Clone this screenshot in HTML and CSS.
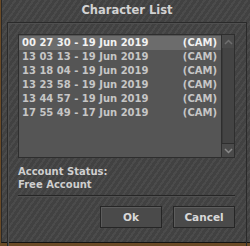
FILE: index.html
```html
<!DOCTYPE html>
<html lang="en">
<head>
    <meta charset="UTF-8">
    <title>Character List</title>
    <link rel="stylesheet" href="styles.css">
</head>
<body>
    <div class="window">
        <div class="title">Character List</div>
        <div class="panel">
            <div class="listbox">
                <div class="list" id="charList"></div>
                <div class="scrollbar">
                    <div class="arrow up">
                        <svg width="9" height="6" viewBox="0 0 9 6"><path d="M1 5 L4.5 1.5 L8 5" fill="none" stroke="#6e6e6e" stroke-width="1.5"/></svg>
                    </div>
                    <div class="track"></div>
                    <div class="arrow down">
                        <svg width="9" height="6" viewBox="0 0 9 6"><path d="M1 1 L4.5 4.5 L8 1" fill="none" stroke="#8a8a8a" stroke-width="1.5"/></svg>
                    </div>
                </div>
            </div>
            <div class="status">
                <div>Account Status:</div>
                <div>Free Account</div>
            </div>
            <div class="separator"></div>
            <div class="buttons">
                <div class="button">Ok</div>
                <div class="button">Cancel</div>
            </div>
        </div>
    </div>

    <script>
        const characters = [
            "00 27 30 - 19 Jun 2019",
            "13 03 13 - 19 Jun 2019",
            "13 18 04 - 19 Jun 2019",
            "13 23 58 - 19 Jun 2019",
            "13 44 57 - 19 Jun 2019",
            "17 55 49 - 17 Jun 2019"
        ];

        const charList = document.getElementById("charList");
        characters.forEach((name, i) => {
            const row = document.createElement("div");
            row.className = i === 0 ? "row selected" : "row";
            row.innerHTML = `<span>${name}</span><span>(CAM)</span>`;
            charList.appendChild(row);
        });
    </script>
</body>
</html>
```

FILE: styles.css
```css
/* General */
body {
    margin: 0;
    width: 250px;
    height: 246px;
    background: #6a4a26;
    font-family: "DejaVu Sans", Verdana, sans-serif;
    font-weight: bold;
    overflow: hidden;
}

.window {
    height: 242px;
    margin-left: 1px;
    padding: 0 3px 0 5px;
    background-color: #454545;
    background-image: repeating-linear-gradient(125deg, rgba(255, 255, 255, 0.03) 0 2px, rgba(0, 0, 0, 0.05) 2px 5px);
    border-left: 1px solid #2a2a2a;
    border-bottom: 1px solid #111;
}

.title {
    height: 22px;
    line-height: 20px;
    text-align: center;
    color: #d2d2d2;
    font-size: 11.5px;
}

/* Inner panel */
.panel {
    height: 216px;
    padding: 11px 11px 0 10px;
    border: 1px solid #2a2a2a;
    box-shadow: inset 1px 1px 0 #505050;
}

/* List box */
.listbox {
    display: flex;
    height: 122px;
    border: 1px solid #2e2e2e;
    background: #555;
}

.list {
    flex: 1;
    padding-top: 1px;
}

.row {
    display: flex;
    justify-content: space-between;
    height: 14px;
    line-height: 14px;
    padding: 0 4px 0 3px;
    font-size: 10px;
    color: #c6c6c6;
}

.row.selected {
    background: #6c6c6c;
    color: #f2f2f2;
}

.scrollbar {
    display: flex;
    flex-direction: column;
    width: 12px;
    border-left: 1px solid #2e2e2e;
    background: #3c3c3c;
}

.arrow {
    height: 13px;
    display: flex;
    align-items: center;
    justify-content: center;
    background: #4a4a4a;
}

.arrow.down {
    border-top: 1px solid #2e2e2e;
}

.track {
    flex: 1;
    background: #444;
    border-left: 1px solid #3a3a3a;
}

/* Status */
.status {
    margin-top: 7px;
    font-size: 10px;
    line-height: 13px;
    color: #cfcfcf;
}

.separator {
    margin-top: 4px;
    height: 1px;
    background: #262626;
    box-shadow: 0 1px 0 #505050;
}

/* Buttons */
.buttons {
    display: flex;
    justify-content: flex-end;
    gap: 11px;
    margin-top: 10px;
}

.button {
    width: 60px;
    height: 20px;
    line-height: 20px;
    text-align: center;
    font-size: 10.5px;
    color: #d8d8d8;
    background: #4a4a4a;
    border: 1px solid #262626;
    box-shadow: inset 1px 1px 0 #5c5c5c;
}
```
